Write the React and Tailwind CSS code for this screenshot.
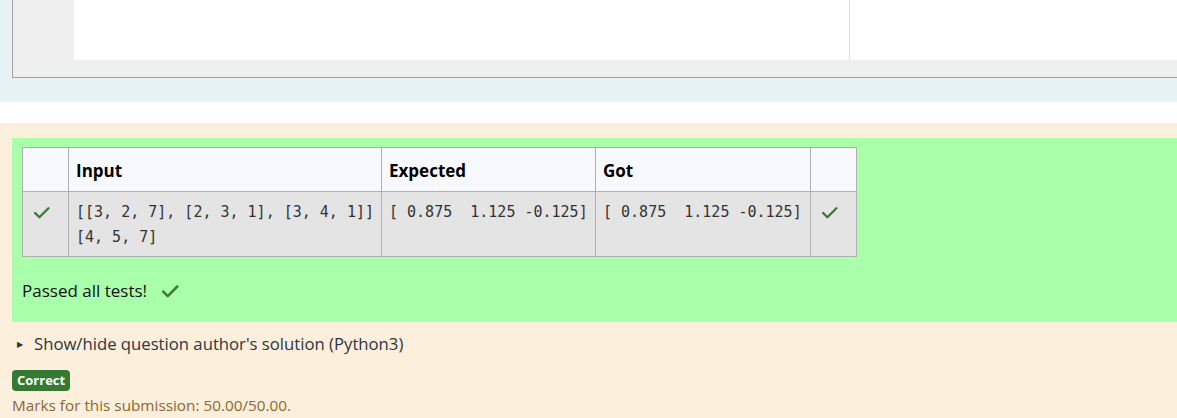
import React from 'react';

function Check({ className = '' }) {
  return (
    <svg viewBox="0 0 16 16" className={className} fill="none" stroke="currentColor" strokeWidth="2.2" strokeLinecap="round" strokeLinejoin="round">
      <path d="M2 8.5l4 4L14.5 4" />
    </svg>
  );
}

export default function App() {
  const mono = "font-['DejaVu_Sans_Mono','Liberation_Mono',monospace] text-[15px] leading-[25px] text-[#333]";
  return (
    <div className="h-[418px] w-[1177px] overflow-hidden bg-white font-['Open_Sans','Noto_Sans',sans-serif]">
      <div className="h-[102px] bg-[#e7f3f5] pl-[12px]">
        <div className="mr-[-20px] flex h-[78px] flex-col border-b border-l border-[#a0a0a0] bg-[#efefef]">
          <div className="flex h-[60px]">
            <div className="w-[61px]" />
            <div className="w-[776px] border-r border-[#dcdcdc] bg-white" />
            <div className="flex-1 bg-white" />
          </div>
        </div>
      </div>
      <div className="h-[21px]" />
      <div className="h-[295px] bg-[#fcefdc] pt-[15px]">
        <div className="ml-[12px] h-[184px] bg-[#aaffaa] px-[10px] pt-[9px]">
          <table className="border-collapse bg-[#e4e4e4]">
            <thead>
              <tr className="h-[44px] bg-[#f8f9ff] text-left text-[17px] font-bold text-black">
                <th className="w-[46px] border border-[#b0b0b0]" />
                <th className="w-[313px] border border-[#b0b0b0] px-[7px] pt-[2px] font-bold">Input</th>
                <th className="w-[214px] border border-[#b0b0b0] px-[7px] pt-[2px] font-bold">Expected</th>
                <th className="w-[215px] border border-[#b0b0b0] px-[7px] pt-[2px] font-bold">Got</th>
                <th className="w-[46px] border border-[#b0b0b0]" />
              </tr>
            </thead>
            <tbody>
              <tr className="h-[65px] align-top">
                <td className="border border-[#b0b0b0] px-[10px] pt-[12px]">
                  <Check className="h-[17px] w-[17px] text-[#3b7a35]" />
                </td>
                <td className={`border border-[#b0b0b0] px-[7px] pt-[8px] ${mono}`}>
                  <div>[[3, 2, 7], [2, 3, 1], [3, 4, 1]]</div>
                  <div>[4, 5, 7]</div>
                </td>
                <td className={`border border-[#b0b0b0] px-[7px] pt-[8px] whitespace-pre ${mono}`}>[ 0.875  1.125 -0.125]</td>
                <td className={`border border-[#b0b0b0] px-[7px] pt-[8px] whitespace-pre ${mono}`}>[ 0.875  1.125 -0.125]</td>
                <td className="border border-[#b0b0b0] px-[10px] pt-[12px]">
                  <Check className="h-[17px] w-[17px] text-[#3b7a35]" />
                </td>
              </tr>
            </tbody>
          </table>
          <div className="mt-[21px] flex items-center gap-[14px] text-[17px] text-[#111]">
            <span>Passed all tests!</span>
            <Check className="h-[18px] w-[18px] text-[#3b7a35]" />
          </div>
        </div>
        <div className="mt-[9px] flex items-center pl-[17px] text-[16.7px] text-[#2d3540]">
          <span className="mr-[11px] text-[8px]">▶</span>
          <span>Show/hide question author's solution (Python3)</span>
        </div>
        <div className="ml-[12px] mt-[14px] inline-block rounded-[4px] bg-[#357a32] px-[5px] text-[13px] font-bold leading-[21px] text-white">Correct</div>
        <div className="pl-[12px] pt-[4px] text-[15.3px] leading-[20px] text-[#8e662e]">Marks for this submission: 50.00/50.00.</div>
      </div>
    </div>
  );
}
